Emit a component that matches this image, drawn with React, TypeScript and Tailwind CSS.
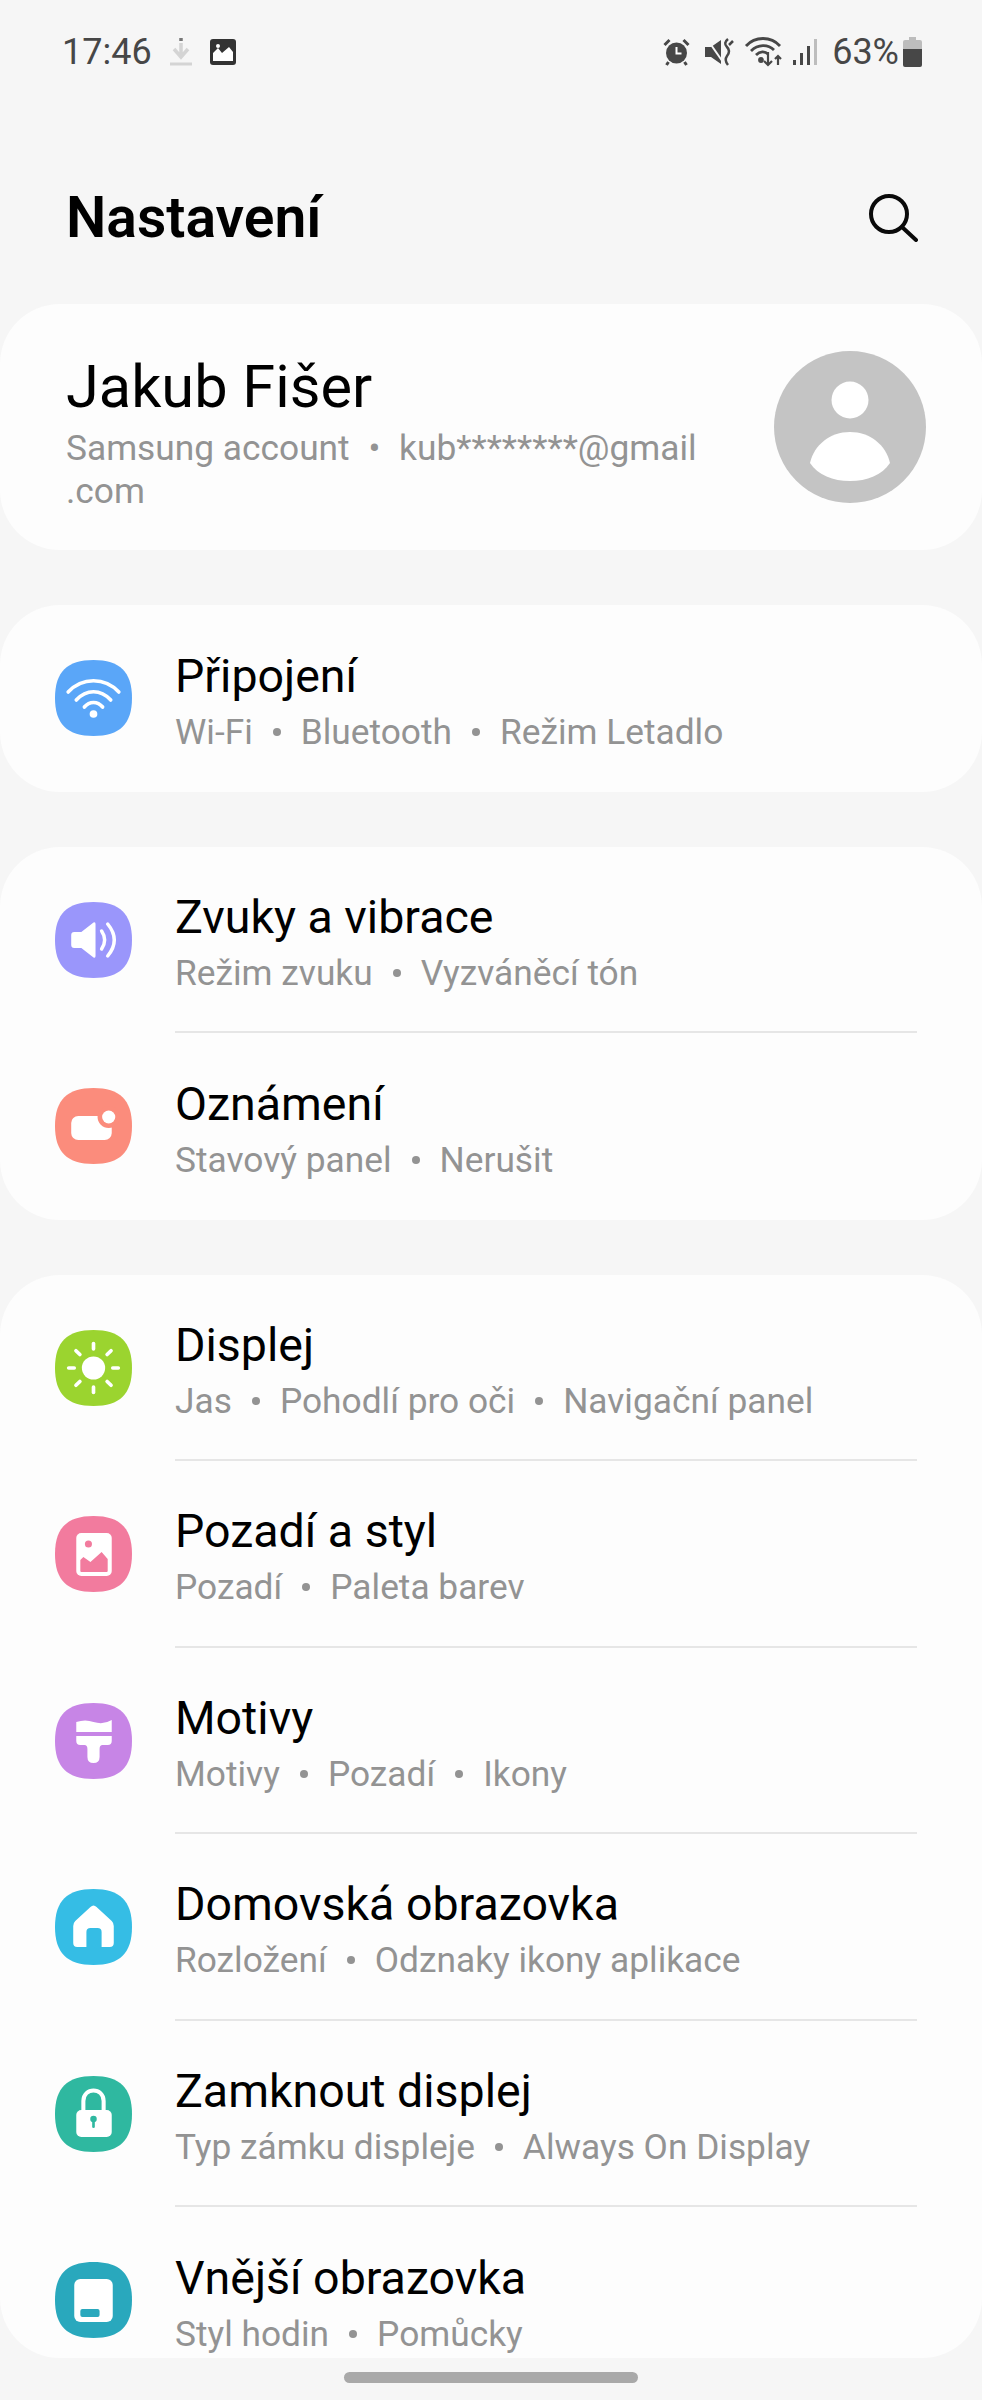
import type { ReactNode } from 'react';

const font = { fontFamily: 'Roboto, sans-serif' };

function Squircle({ color, children }: { color: string; children: ReactNode }) {
    return (
        <svg width="77" height="76" viewBox="0 0 76 76" preserveAspectRatio="none" className="shrink-0">
            <path d="M38 0C64 0 76 12 76 38C76 64 64 76 38 76C12 76 0 64 0 38C0 12 12 0 38 0Z" fill={color} />
            {children}
        </svg>
    );
}

const WifiIcon = () => (
    <Squircle color="#5aa6f8">
        <g fill="none" stroke="#fff" strokeWidth="3.6" strokeLinecap="round">
            <path d="M13 32C27 17 49 17 63 32" />
            <path d="M21 40C31 29 45 29 55 40" />
            <path d="M29 47C34 41 42 41 47 47" />
        </g>
        <circle cx="38" cy="54" r="3.8" fill="#fff" />
    </Squircle>
);

const SoundIcon = () => (
    <Squircle color="#9a96fb">
        <path d="M16 33Q16 30 19 30H26L38 20.5Q40 19.5 40 22V54Q40 56.500 38 55.500L26 46H19Q16 46 16 43Z" fill="#fff" />
        <g fill="none" stroke="#fff" strokeWidth="3.4" strokeLinecap="round">
            <path d="M46 29Q52 38 46 47" />
            <path d="M52 22Q65 38 52 54" />
        </g>
    </Squircle>
);

const NotifyIcon = () => (
    <Squircle color="#fb8c7c">
        <rect x="16" y="28" width="40" height="24" rx="7" fill="#fff" />
        <circle cx="53" cy="29" r="11" fill="#fb8c7c" />
        <circle cx="53" cy="29" r="6.5" fill="#fff" />
    </Squircle>
);

const rays = [0, 45, 90, 135, 180, 225, 270, 315];

const DisplayIcon = () => (
    <Squircle color="#9bd42f">
        <circle cx="38" cy="38" r="11.500" fill="#fff" />
        {rays.map((r) => (
            <path key={r} d="M38 13.500V19" stroke="#fff" strokeWidth="3.600" strokeLinecap="round" transform={`rotate(${r} 38 38)`} />
        ))}
    </Squircle>
);

const WallpaperIcon = () => (
    <Squircle color="#f27b9e">
        <rect x="21" y="17" width="35" height="43" rx="5" fill="#fff" />
        <circle cx="33" cy="28" r="3.500" fill="#f27b9e" />
        <path d="M25 55V44L28 41L35 46L46 36L52 43V55Q52 56 51 56H26Q25 56 25 55Z" fill="#f27b9e" />
    </Squircle>
);

const ThemeIcon = () => (
    <Squircle color="#c785e6">
        <path d="M21 19Q30 16 38 19Q48 22 56 17V29H21Z" fill="#fff" />
        <path d="M21 33H56V38Q56 42 52 42H47Q44 42 44 46V54Q44 60 38 60Q32 60 32 54V46Q32 42 29 42H25Q21 42 21 38Z" fill="#fff" />
    </Squircle>
);

const HomeIcon = () => (
    <Squircle color="#35bde5">
        <path d="M18 37Q18 34 20 32L35 18Q38 15 41 18L56 32Q58 34 58 37V54Q58 58 54 58H46V43Q46 39 42 39H35Q31 39 31 43V58H22Q18 58 18 54Z" fill="#fff" />
    </Squircle>
);

const LockIcon = () => (
    <Squircle color="#2fb8a0">
        <path d="M28 36V25C28 11 48 11 48 25V36" fill="none" stroke="#fff" strokeWidth="4" />
        <rect x="21" y="34" width="35" height="27" rx="5" fill="#fff" />
        <circle cx="38" cy="43" r="3.200" fill="#2fb8a0" />
        <rect x="36.700" y="43" width="2.600" height="9" rx="1.300" fill="#2fb8a0" />
    </Squircle>
);

const CoverIcon = () => (
    <Squircle color="#29a8bd">
        <rect x="19" y="17" width="38" height="43" rx="6" fill="#fff" />
        <rect x="25" y="47" width="19" height="8" rx="2" fill="#29a8bd" />
    </Squircle>
);

function Row({ icon, title, parts, last }: { icon: ReactNode; title: string; parts: string[]; last?: boolean }) {
    return (
        <div className="flex h-[186.5px] items-center pl-[55px] pr-[65px]">
            {icon}
            <div className={`ml-[43px] flex h-full flex-1 flex-col justify-center pt-[8px] ${last ? '' : 'border-b-2 border-[#e6e6e6]'}`}>
                <div className="text-[46.500px] leading-[60px] text-black">{title}</div>
                <div className="flex text-[35.300px] leading-[52px] text-[#939393]">
                    {parts.map((p, i) => (
                        <span key={p} className="flex items-center">
                            {i > 0 && <span className="mx-[20px] h-[8px] w-[8px] rounded-full bg-[#939393]" />}
                            {p}
                        </span>
                    ))}
                </div>
            </div>
        </div>
    );
}

function StatusBar() {
    return (
        <div className="flex h-[104px] shrink-0 items-center justify-between pl-[62px] pr-[60px] text-[#474747]">
            <div className="flex items-center">
                <span className="text-[36px] leading-[40px]">17:46</span>
                <svg width="24" height="30" viewBox="0 0 24 30" className="ml-[17px]">
                    <path d="M12 1V4" stroke="#777" strokeWidth="3.500" />
                    <path d="M12 6V18M5 12L12 20L19 12" stroke="#d4d4d4" strokeWidth="3.500" fill="none" />
                    <path d="M1 27H23" stroke="#d4d4d4" strokeWidth="3" />
                </svg>
                <svg width="26" height="26" viewBox="0 0 26 26" className="ml-[17px]">
                    <rect width="26" height="26" rx="3" fill="#333" />
                    <path d="M3 22V14L8 9L12 14L19 8L23 13V22Z" fill="#fff" />
                    <circle cx="8" cy="7" r="2" fill="#fff" />
                </svg>
            </div>
            <div className="flex items-center">
                <svg width="29" height="28" viewBox="0 0 28 28">
                    <circle cx="14" cy="15" r="10.500" fill="#474747" />
                    <path d="M14 9V15.500H19" stroke="#fff" strokeWidth="2" fill="none" />
                    <path d="M2 7L7 2M26 7L21 2M6 24L4 27M22 24L24 27" stroke="#474747" strokeWidth="3" />
                </svg>
                <svg width="30" height="30" viewBox="0 0 30 28" className="ml-[13px]">
                    <path d="M1 9H7L17 2V26L7 19H1Z" fill="#474747" />
                    <path d="M3 1L21 27" stroke="#f6f6f6" strokeWidth="2" />
                    <path d="M24 1Q19 5 23 9Q27 13 23 18Q20 22 24 27M29 3L25 7" stroke="#474747" strokeWidth="2.500" fill="none" />
                </svg>
                <svg width="42" height="30" viewBox="0 0 40 30" className="ml-[10px]" fill="none" stroke="#474747" strokeWidth="2.800">
                    <path d="M1 9C10 -1 26 -1 35 9" />
                    <path d="M6 14C13 7 23 7 29 13" />
                    <path d="M11 18C15 14 20 14 23 17" />
                    <circle cx="16" cy="23" r="1.500" fill="#474747" />
                    <path d="M23 15V28M19 24L23 28L27 24" strokeWidth="2.200" />
                    <path d="M33 28V19M30 22L33 19L36 22" strokeWidth="2.200" />
                </svg>
                <svg width="26" height="28" viewBox="0 0 26 28" className="ml-[6px]">
                    <rect x="1" y="22" width="3" height="5" fill="#474747" />
                    <rect x="8" y="15" width="3" height="12" fill="#474747" />
                    <rect x="15" y="8" width="3" height="19" fill="#474747" />
                    <rect x="22" y="1" width="3" height="26" fill="#bdbdbd" />
                </svg>
                <span className="ml-[14px] text-[36px] leading-[40px]">63%</span>
                <svg width="19" height="30" viewBox="0 0 19 30" className="ml-[4px]">
                    <path d="M6 0H13V3H17Q19 3 19 5V12H0V5Q0 3 2 3H6Z" fill="#bdbdbd" />
                    <path d="M0 12H19V28Q19 30 17 30H2Q0 30 0 28Z" fill="#474747" />
                </svg>
            </div>
        </div>
    );
}

export default function App() {
    return (
        <div className="flex h-[2400px] flex-col overflow-hidden bg-[#f6f6f6]" style={font}>
            <div className="flex h-[2358px] flex-col overflow-hidden rounded-b-[60px]">
                <StatusBar />
                <div className="flex h-[200px] shrink-0 items-center justify-between pl-[66px] pr-[64px] pt-[28px]">
                    <h1 className="text-[57px] font-semibold leading-[60px] text-black">Nastavení</h1>
                    <svg width="50" height="48" viewBox="0 0 50 48" fill="none" stroke="#0a0a0a" strokeWidth="4" strokeLinecap="round">
                        <circle cx="21" cy="20" r="18" />
                        <path d="M34 33L48 46" />
                    </svg>
                </div>

                <div className="flex h-[246px] shrink-0 items-center justify-between rounded-[60px] bg-[#fdfdfd] pl-[66px] pr-[56px]">
                    <div className="mt-[6px]">
                        <div className="text-[59.500px] leading-[80px] text-black">Jakub Fišer</div>
                        <div className="w-[690px] whitespace-nowrap text-[35.300px] leading-[43px] text-[#939393]">
                            Samsung account <span className="mx-[10px]">•</span> kub********@gmail<br />.com
                        </div>
                    </div>
                    <svg width="152" height="152" viewBox="0 0 152 152" className="shrink-0">
                        <circle cx="76" cy="76" r="76" fill="#c4c4c4" />
                        <circle cx="76" cy="49" r="18.500" fill="#fff" />
                        <path d="M36 112C40 94 56 81 76 81C96 81 112 94 116 112C108 124 93 130 76 130C59 130 44 124 36 112Z" fill="#fff" />
                    </svg>
                </div>

                <div className="mt-[55px] shrink-0 rounded-[60px] bg-[#fdfdfd]">
                    <Row icon={<WifiIcon />} title="Připojení" parts={['Wi-Fi', 'Bluetooth', 'Režim Letadlo']} last />
                </div>

                <div className="mt-[55px] shrink-0 rounded-[60px] bg-[#fdfdfd]">
                    <Row icon={<SoundIcon />} title="Zvuky a vibrace" parts={['Režim zvuku', 'Vyzváněcí tón']} />
                    <Row icon={<NotifyIcon />} title="Oznámení" parts={['Stavový panel', 'Nerušit']} last />
                </div>

                <div className="mt-[55px] shrink-0 rounded-t-[60px] bg-[#fdfdfd]">
                    <Row icon={<DisplayIcon />} title="Displej" parts={['Jas', 'Pohodlí pro oči', 'Navigační panel']} />
                    <Row icon={<WallpaperIcon />} title="Pozadí a styl" parts={['Pozadí', 'Paleta barev']} />
                    <Row icon={<ThemeIcon />} title="Motivy" parts={['Motivy', 'Pozadí', 'Ikony']} />
                    <Row icon={<HomeIcon />} title="Domovská obrazovka" parts={['Rozložení', 'Odznaky ikony aplikace']} />
                    <Row icon={<LockIcon />} title="Zamknout displej" parts={['Typ zámku displeje', 'Always On Display']} />
                    <Row icon={<CoverIcon />} title="Vnější obrazovka" parts={['Styl hodin', 'Pomůcky']} last />
                </div>
            </div>
            <div className="flex flex-1 items-center justify-center pb-[4px]">
                <div className="h-[11px] w-[294px] rounded-full bg-[#a9a9a9]" />
            </div>
        </div>
    );
}
